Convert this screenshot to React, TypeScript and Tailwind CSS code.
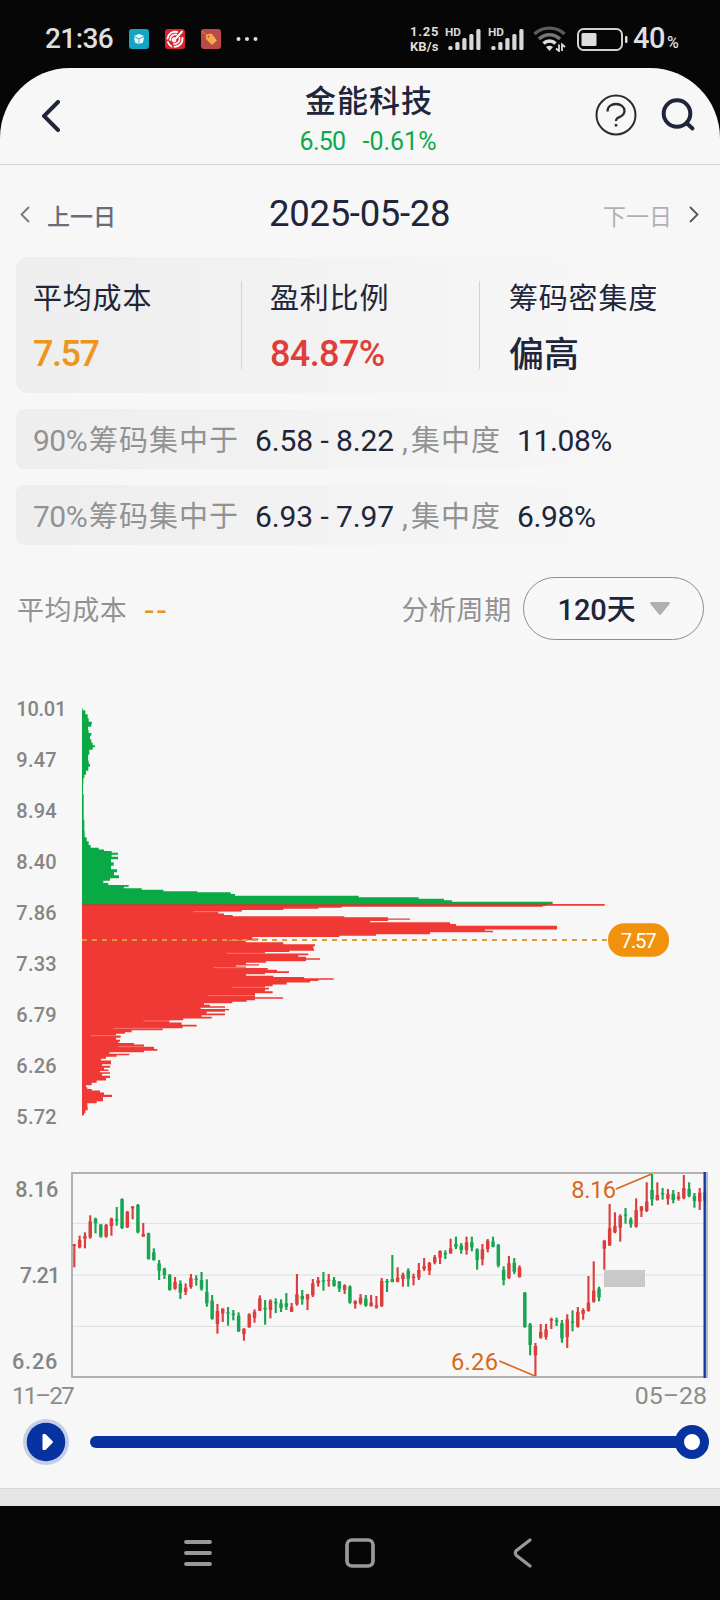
import React from 'react';

type Step = [number, number];
type Candle = [number, number, number, number, number];

// [right edge, y] of the chip distribution above the current price, in 1/3 px
const LOSS_STEPS: Step[] = [
  [248, 85], [256, 97], [263, 108], [266, 122], [276, 128], [274, 134], [264, 146], [266, 155], [274, 163],
  [270, 172], [274, 183], [278, 193], [285, 199], [278, 205], [268, 214], [264, 235], [266, 248], [270, 255],
  [265, 266], [258, 278], [253, 290], [250, 300], [249, 325], [251, 360], [251, 400], [253, 440], [254, 466],
  [260, 478], [266, 490], [272, 500], [296, 506], [312, 511], [335, 515], [354, 521], [335, 527], [354, 534],
  [333, 542], [341, 552], [333, 562], [351, 574], [342, 580], [357, 591], [330, 599], [310, 606], [325, 612],
  [386, 618], [372, 623], [425, 627], [490, 632], [592, 635], [692, 639], [705, 645], [1076, 650], [1256, 654],
  [1332, 659], [1356, 663], [1658, 668], [1658, 671],
];

// same, below the current price
const PROFIT_STEPS: Step[] = [
  [1814, 42], [1814, 46], [1628, 49], [1025, 52], [955, 54], [850, 58], [725, 62], [655, 68], [672, 73], [698, 77],
  [1033, 80], [1164, 84], [1230, 87], [1164, 91], [1110, 95], [1350, 99], [1368, 105], [1671, 109], [1671, 117],
  [1455, 120], [1479, 124], [1290, 130], [1128, 135], [1018, 139], [757, 143], [775, 148], [737, 154],
  [850, 160], [945, 165], [940, 172], [942, 180], [868, 184], [795, 188], [925, 193], [895, 198],
  [918, 203], [960, 207], [918, 212], [798, 216], [738, 221], [777, 225], [708, 228], [738, 231],
  [803, 237], [831, 241], [867, 247], [795, 251], [738, 255], [820, 259], [912, 263], [1001, 267], [955, 271],
  [930, 275], [860, 280], [818, 287], [795, 290], [807, 296], [795, 301], [818, 307], [765, 313],
  [765, 320], [849, 324], [765, 329], [740, 333], [697, 338], [612, 342], [630, 347], [675, 351],
  [602, 355], [687, 359], [675, 363], [620, 368], [675, 373], [605, 378], [635, 383], [550, 388],
  [508, 394], [545, 401], [590, 407], [548, 412], [488, 418], [395, 424], [375, 429], [348, 433],
  [362, 440], [348, 446], [360, 453], [355, 457], [402, 461], [432, 466], [462, 474],
  [472, 480], [432, 485], [328, 489], [388, 493], [350, 498], [318, 503], [303, 509], [333, 514], [333, 520],
  [306, 525], [330, 530], [312, 536], [325, 541], [300, 545], [330, 549], [306, 554], [330, 560], [318, 568],
  [290, 575], [275, 582], [258, 589], [262, 595], [275, 599], [300, 604], [312, 611], [336, 618], [309, 624],
  [309, 631], [290, 637], [262, 643], [263, 655], [256, 666], [252, 674], [247, 677],
];

// hairline gaps between neighbouring bars: [from, to, y]
const GAPS = [
  [580, 725, 65], [685, 745, 151], [680, 795, 190], [640, 738, 233], [697, 795, 292],
  [625, 765, 317], [430, 508, 393], [340, 488, 415], [272, 348, 437], [355, 432, 470],
];

// [rising, high, low, body top, body bottom]
const CANDLES: Candle[] = [
  [1, 252, 322, 253, 258], [1, 227, 265, 240, 262], [1, 217, 265, 228, 236], [1, 166, 236, 184, 232],
  [0, 173, 220, 176, 190], [0, 192, 233, 194, 230], [1, 192, 233, 195, 230], [1, 173, 227, 176, 198],
  [0, 141, 197, 178, 182], [0, 115, 207, 117, 204], [1, 153, 204, 155, 202], [1, 138, 178, 140, 145],
  [0, 132, 220, 135, 217], [1, 189, 230, 222, 230], [0, 218, 299, 220, 297], [0, 265, 302, 277, 300],
  [0, 300, 360, 310, 332], [0, 323, 357, 326, 345], [0, 342, 392, 345, 390], [1, 351, 389, 366, 386],
  [0, 361, 417, 371, 398], [1, 370, 405, 383, 395], [1, 342, 386, 354, 381], [0, 346, 377, 356, 360],
  [0, 336, 392, 360, 387], [0, 358, 440, 396, 430], [0, 405, 479, 422, 477], [1, 432, 521, 453, 492],
  [1, 445, 486, 446, 460], [0, 441, 497, 457, 461], [0, 450, 481, 461, 465], [0, 457, 516, 467, 514],
  [1, 505, 542, 506, 522], [1, 460, 503, 463, 502], [1, 448, 488, 455, 474], [1, 406, 453, 415, 452],
  [0, 420, 494, 444, 448], [1, 418, 475, 422, 450], [0, 415, 459, 426, 430], [0, 418, 456, 430, 444],
  [0, 399, 450, 430, 440], [1, 429, 456, 441, 455], [1, 342, 437, 403, 433], [0, 390, 434, 408, 418],
  [1, 402, 450, 403, 418], [1, 357, 411, 370, 406], [1, 351, 380, 361, 370], [0, 336, 392, 361, 365],
  [1, 342, 380, 359, 363], [0, 351, 380, 360, 378], [0, 363, 396, 365, 386], [1, 373, 402, 376, 390],
  [0, 376, 431, 380, 428], [1, 421, 446, 423, 432], [1, 402, 434, 413, 430], [0, 405, 440, 416, 437],
  [1, 405, 440, 428, 438], [1, 408, 446, 436, 442], [1, 354, 441, 363, 438], [0, 357, 396, 363, 368],
  [0, 285, 367, 357, 366], [1, 322, 367, 353, 365], [1, 338, 380, 344, 357], [0, 325, 380, 332, 356],
  [1, 341, 376, 350, 354], [1, 309, 360, 330, 353], [1, 294, 333, 318, 327], [1, 306, 345, 309, 332],
  [1, 285, 313, 291, 308], [1, 271, 312, 273, 293], [0, 271, 297, 279, 283], [1, 236, 281, 265, 280],
  [0, 230, 267, 252, 260], [0, 249, 281, 256, 270], [1, 230, 284, 247, 270], [0, 230, 274, 247, 262],
  [0, 265, 329, 268, 300], [1, 252, 316, 268, 298], [1, 237, 277, 242, 267], [0, 230, 262, 245, 260],
  [0, 252, 322, 255, 316], [0, 319, 376, 330, 360], [1, 288, 357, 310, 354], [0, 294, 342, 308, 335],
  [1, 316, 353, 322, 351], [0, 396, 503, 398, 501], [0, 489, 586, 493, 555], [1, 549, 648, 558, 586],
  [1, 492, 536, 516, 533], [1, 492, 539, 508, 531], [1, 473, 507, 477, 482], [0, 473, 498, 481, 485],
  [0, 480, 548, 490, 535], [1, 463, 564, 478, 531], [0, 451, 514, 484, 488], [1, 441, 503, 456, 500],
  [1, 445, 479, 450, 462], [1, 348, 455, 428, 453], [1, 304, 428, 392, 425], [0, 380, 424, 386, 412],
  [1, 240, 329, 242, 266], [1, 132, 258, 205, 256], [1, 157, 220, 198, 217], [1, 163, 245, 168, 203],
  [0, 144, 191, 163, 167], [0, 172, 203, 178, 193], [1, 115, 203, 150, 200], [1, 138, 171, 140, 153],
  [1, 67, 156, 125, 153], [0, 42, 137, 90, 118], [1, 67, 122, 105, 120], [0, 84, 119, 99, 103],
  [1, 87, 134, 102, 117], [0, 90, 130, 102, 120], [1, 96, 122, 109, 117], [1, 45, 118, 84, 114],
  [0, 67, 112, 87, 108], [0, 99, 143, 108, 123], [1, 84, 150, 98, 125], [0, 90, 128, 97, 122],
];

const PRICES = ['10.01', '9.47', '8.94', '8.40', '7.86', '7.33', '6.79', '6.26', '5.72'];

const stepPath = (steps: Step[], base: number) => {
  let d = `M${base} ${steps[0][1]}`;
  steps.forEach(([x, y], i) => {
    const next = steps[i + 1];
    d += `H${x}V${next ? (y + next[1]) / 2 : y + 2}`;
  });
  return `${d}H${base}Z`;
};

const Signal = () => (
  <svg width="36" height="26" viewBox="0 0 36 26" className="shrink-0">
    <text x="0" y="9.500" fontSize="11" fontWeight="700" textLength="16" lengthAdjust="spacingAndGlyphs" fill="#d8d8d8">HD</text>
    {[4, 8, 12, 16, 21].map((h, i) => (
      <rect key={h} x={3.3 + i * 7} y={24 - h} width="4.200" height={h} rx="1.500" fill="#d8d8d8" />
    ))}
  </svg>
);

const StatusBar = () => (
  <div className="flex h-[68px] items-center pt-[10px] pl-[45px] text-[#dedede]">
    <span className="w-[84px] text-[28px] font-medium tracking-[-0.6px]">21:36</span>
    <svg width="20" height="20" viewBox="0 0 20 20">
      <rect width="20" height="20" rx="3" fill="#12a5c4" />
      <path d="M10 5l5 2-5 2.200L5 7z" fill="#fff" />
      <path d="M5 8l4.600 2v5L6 13.500zM15 8l-4.600 2v5l3.600-1.500z" fill="#e8f8fb" />
    </svg>
    <svg width="20" height="20" viewBox="0 0 20 20" className="ml-4">
      <rect width="20" height="20" rx="3" fill="#d9232f" />
      <g fill="none" stroke="#fff" strokeLinecap="round">
        <path d="M17 2.500L9 11.500M2.500 9.500C3 5 7 2 12 3M17.500 9c.5 4.500-3 9-8 8.800" strokeWidth="1.900" />
        <path d="M5 11c0-3.500 3-6 6.500-5.500M14.500 8.500c1 3.500-2 6.500-5.500 6.500M2.800 13c.7 2 1.700 3.500 3.700 4.500M9 9c-3 2-1 4.500 1.500 3" strokeWidth="1.700" />
      </g>
    </svg>
    <svg width="20" height="20" viewBox="0 0 20 20" className="ml-4">
      <rect width="20" height="20" rx="3" fill="#bd4a4b" />
      <path d="M5.500 6l5-1 5 6.500-4.500 4L5.500 10z" fill="#f3ad45" stroke="#f3ad45" strokeLinejoin="round" />
      <path d="M1 2.500l5 4" stroke="#f0c070" strokeWidth=".8" strokeDasharray="1.500 1" />
      <circle cx="7.500" cy="7.500" r="1" fill="#bd4a4b" />
    </svg>
    <svg width="22" height="6" viewBox="0 0 22 6" className="ml-[15px]">
      <circle cx="2.500" cy="3" r="2" fill="#dedede" />
      <circle cx="11" cy="3" r="2" fill="#dedede" />
      <circle cx="19.500" cy="3" r="2" fill="#dedede" />
    </svg>
    <div className="ml-[152px] w-[35px] text-[13px] leading-[15px] font-bold whitespace-nowrap">
      <div className="tracking-[0.8px]">1.25</div>
      <div className="tracking-[0.1px]">KB/s</div>
    </div>
    <Signal />
    <div className="w-[7px]" />
    <Signal />
    <svg width="34" height="26" viewBox="0 0 34 26" className="ml-[9px]">
      <g fill="none" strokeWidth="3.400">
        <path d="M1.500 8a22 22 0 0 1 30 0" stroke="#5c5c5c" />
        <path d="M6 13a15 15 0 0 1 21 0" stroke="#777" />
        <path d="M10.500 17.500a8.500 8.500 0 0 1 12 0" stroke="#dedede" />
      </g>
      <path d="M16.500 25l-3.500-4a6 6 0 0 1 7 0z" fill="#dedede" />
      <path d="M26 18.500v6.500l-3-2.500M29 25v-6.500l3 2.500" stroke="#dedede" strokeWidth="1.800" fill="none" />
    </svg>
    <svg width="52" height="24" viewBox="0 0 52 24" className="ml-[10px]">
      <rect x="1" y="2" width="44" height="21" rx="5.500" fill="none" stroke="#d0d0d0" strokeWidth="2" />
      <rect x="4.500" y="6" width="15" height="13" rx="1.500" fill="#dedede" />
      <rect x="48" y="9" width="2.500" height="7" rx="1" fill="#dedede" />
    </svg>
    <div className="ml-[4px] flex items-baseline font-medium">
      <span className="text-[29px] tracking-[-0.5px]">40</span>
      <span className="ml-[2px] text-[16px]">%</span>
    </div>
  </div>
);

const Header = () => (
  <header className="flex h-[97px] items-start border-b border-[#d2d2d2]">
    <svg width="18" height="32" viewBox="0 0 18 32" className="mt-8 ml-[42px] shrink-0">
      <path d="M16 2L2 16l14 14" fill="none" stroke="#20253a" strokeWidth="4" strokeLinecap="round" />
    </svg>
    <div className="ml-[228px] flex w-[160px] flex-col items-center">
      <h1 className="mt-[16px] pl-[2px] text-[31px] leading-[36px] font-medium tracking-[1px] whitespace-nowrap">金能科技</h1>
      <div className="mt-[6px] flex gap-[17px] text-[25px] leading-[32px] text-[#0da84a]">
        <span className="tracking-[-0.7px]">6.50</span>
        <span>-0.61%</span>
      </div>
    </div>
    <svg width="42" height="42" viewBox="0 0 42 42" className="mt-[26px] ml-[147px]" fill="none" stroke="#2b2c31">
      <circle cx="21" cy="21" r="19.500" strokeWidth="2" />
      <path d="M12.500 17.500c0-5 4-7.500 8.500-7.500s8.500 2.700 8.500 7-3.500 5.500-6 6.500c-2 1-2.500 1.700-2.500 3.500" strokeWidth="2.300" />
      <path d="M21 30v2.500" strokeWidth="2.500" />
    </svg>
    <svg width="36" height="36" viewBox="0 0 36 36" className="mt-[29px] ml-[23px]" fill="none" stroke="#20253a" strokeWidth="4">
      <circle cx="17" cy="16.500" r="13.300" />
      <path d="M26.500 26l6 5.500" strokeLinecap="round" />
    </svg>
  </header>
);

const DayNav = () => (
  <div className="flex h-[92px] items-center pt-[6px]">
    <svg width="10" height="17" viewBox="0 0 10 17" className="ml-[20px]">
      <path d="M9 1L1.500 8.500 9 16" fill="none" stroke="#777" strokeWidth="1.800" />
    </svg>
    <span className="mt-[9px] ml-[17px] w-[222px] text-[23px] font-medium text-[#696d79]">上一日</span>
    <span className="w-[202px] text-[36.500px] leading-[40px] tracking-[-0.300px] whitespace-nowrap">2025-05-28</span>
    <span className="mt-[9px] ml-[132px] text-[23px] text-[#b0b1b6]">下一日</span>
    <svg width="10" height="17" viewBox="0 0 10 17" className="ml-[17px]">
      <path d="M1 1l7.500 7.500L1 16" fill="none" stroke="#555" strokeWidth="1.800" />
    </svg>
  </div>
);

const Stat: React.FC<{ label: string; value: string; className: string }> = ({ label, value, className }) => (
  <div>
    <div className="pt-px text-[29px] leading-[34px] tracking-[0.800px] whitespace-nowrap">{label}</div>
    <div className={`leading-[50px] font-medium whitespace-nowrap ${className}`}>{value}</div>
  </div>
);

const Concentration: React.FC<{ pct: string; range: string; value: string }> = ({ pct, range, value }) => (
  <div className="mt-4 flex h-[60px] items-baseline rounded-lg bg-linear-to-r from-[#eeeeee] to-[#f7f7f7] to-90% pt-[2px] pl-[17px] text-[30px] leading-[60px] whitespace-nowrap">
    <span className="w-[56px] tracking-[-0.500px] text-[#929292]">{pct}</span>
    <span className="w-[166px] text-[29px] tracking-[1px] text-[#929292]">筹码集中于</span>
    <span className="w-[147px] tracking-[-0.100px]">{range}</span>
    <span className="w-[9px] text-[#929292]">,</span>
    <span className="w-[106px] text-[29px] tracking-[1px] text-[#929292]">集中度</span>
    <span className="tracking-[-0.400px]">{value}</span>
  </div>
);

const DistributionChart = () => (
  <svg width="720" height="492" viewBox="0 0 2160 1476" className="block">
    <g fontSize="60" fontWeight="500" fill="#858585">
      {PRICES.map((p, i) => (
        <text key={p} x="49" y={108 + i * 153} textLength={p.length > 4 ? 150 : 121}>{p}</text>
      ))}
    </g>
    <path d={stepPath(LOSS_STEPS, 246)} fill="#09aa45" />
    <g transform="translate(0 630)">
      <path d={stepPath(PROFIT_STEPS, 246)} fill="#f03834" />
      {GAPS.map(([from, to, y]) => (
        <path key={y} d={`M${from} ${y}H${to}`} stroke="#f79a96" strokeWidth="2" />
      ))}
    </g>
    <path d="M246 675H1640" stroke="#8a5a33" strokeWidth="4" />
    <path d="M246 780H1820" stroke="#dd9c38" strokeWidth="6" strokeDasharray="15 15" />
    <rect x="1824" y="730" width="183" height="100" rx="48" fill="#f1920f" />
    <text x="1862" y="803" fontSize="61" textLength="108" fill="#fff">7.57</text>
  </svg>
);

const CandleChart = () => (
  <svg width="720" height="252" viewBox="0 0 2160 756" className="block">
    <g stroke="#dedede" strokeWidth="3">
      <path d="M218 190H2120M218 345H2120M218 499H2120" />
    </g>
    <rect x="216" y="39" width="1903" height="612" fill="none" stroke="#b2b2b2" strokeWidth="6" />
    <rect x="1812" y="330" width="123" height="51" fill="#c9c9c9" />
    {CANDLES.map(([up, high, low, top, bottom], i) => {
      const x = 223 + i * 15.9;
      return (
        <g key={i} fill={up ? '#dc3f3b' : '#18a451'}>
          <rect x={x - 3.2} y={high} width="6.400" height={low - high} />
          <rect x={x - 5.2} y={top} width="10.400" height={bottom - top} />
        </g>
      );
    })}
    <path d="M2121 36V654" stroke="#b0b6c6" strokeWidth="6" />
    <path d="M2114 36V654" stroke="#1238a0" strokeWidth="7" />
    <path d="M1848 87L1955 42M1498 603l107 45" stroke="#d66a1c" strokeWidth="5" fill="none" />
    <g fontSize="71" fill="#d66a1c">
      <text x="1714" y="113" textLength="134">8.16</text>
      <text x="1353" y="629" textLength="141">6.26</text>
    </g>
    <g fontSize="65" fontWeight="500" fill="#858585">
      <text x="46" y="110" textLength="129">8.16</text>
      <text x="59" y="368" textLength="122">7.21</text>
      <text x="36" y="626" textLength="136">6.26</text>
    </g>
    <g fontSize="73" fill="#8c8c8c">
      <text x="36" y="731" textLength="188">11–27</text>
      <text x="1904" y="731" textLength="217" lengthAdjust="spacingAndGlyphs">05–28</text>
    </g>
  </svg>
);

const Player = () => (
  <div className="flex h-[76px] items-center pb-[16px] pl-[23px]">
    <svg width="46" height="46" viewBox="0 0 46 46" className="shrink-0">
      <circle cx="23" cy="23" r="23" fill="#c6cee7" />
      <circle cx="23" cy="23" r="19.300" fill="#0733a1" />
      <path d="M20.500 16v14h1.500l7-7-7-7z" fill="#fff" stroke="#fff" strokeWidth="2" strokeLinejoin="round" />
    </svg>
    <div className="ml-[21px] h-[12px] w-[594px] rounded-l-full bg-[#0733a1]" />
    <div className="-ml-[9px] h-[34px] w-[34px] rounded-full border-[9px] border-[#0733a1] bg-white" />
  </div>
);

const NavBar = () => (
  <div className="flex h-[94px] items-center text-[#999]">
    <svg width="28" height="28" viewBox="0 0 28 28" className="ml-[184px]">
      <path d="M2 3h24M2 14h24M2 25h24" stroke="currentColor" strokeWidth="3.800" strokeLinecap="round" />
    </svg>
    <svg width="30" height="30" viewBox="0 0 30 30" className="ml-[133px]">
      <rect x="2" y="2" width="26" height="26" rx="5" fill="none" stroke="currentColor" strokeWidth="3.700" />
    </svg>
    <svg width="20" height="30" viewBox="0 0 20 30" className="ml-[138px]">
      <path d="M17 2L3.500 12.500q-2.500 2.500 0 5L17 28" fill="none" stroke="currentColor" strokeWidth="3.200" strokeLinecap="round" />
    </svg>
  </div>
);

const App = () => (
  <div className="h-[1600px] w-[720px] overflow-hidden bg-[#060606] font-[Roboto,'Noto_Sans_CJK_SC',sans-serif] text-[#20253a]">
    <StatusBar />
    <main className="h-[1438px] overflow-hidden rounded-t-[70px] bg-[#f7f7f7]">
      <Header />
      <DayNav />
      <section className="px-4">
        <div className="flex h-[136px] rounded-xl bg-linear-to-r from-[#eeeeee] to-[#f7f7f7] to-90% pt-[24px] pl-[17px]">
          <div className="h-[88px] w-[209px] border-r border-[#d2d2d2]">
            <Stat label="平均成本" value="7.57" className="pt-[13px] text-[36px] tracking-[-1.5px] text-[#ee951b]" />
          </div>
          <div className="h-[88px] w-[238px] border-r border-[#d2d2d2] pl-[28px]">
            <Stat label="盈利比例" value="84.87%" className="pt-[13px] text-[36px] tracking-[-0.6px] text-[#e03e3a]" />
          </div>
          <div className="pl-[29px]">
            <Stat label="筹码密集度" value="偏高" className="pt-[15px] text-[35px]" />
          </div>
        </div>
        <Concentration pct="90%" range="6.58 - 8.22" value="11.08%" />
        <Concentration pct="70%" range="6.93 - 7.97" value="6.98%" />
      </section>
      <div className="mt-8 flex h-[63px] items-center pl-[17px] text-[27px] text-[#929292]">
        <span className="pt-[6px] tracking-[0.6px]">平均成本</span>
        <span className="ml-[17px] w-[257px] pt-[4px] text-[34px] tracking-[3px] text-[#e8951f]">--</span>
        <span className="w-[122px] pt-[6px] tracking-[0.6px]">分析周期</span>
        <button className="flex h-[63px] w-[181px] items-center rounded-full border border-[#8d8d8d] pl-[33px] text-[29px] font-medium text-[#20253a]">
          <span className="pt-[5px]">120天</span>
          <svg width="22" height="14" viewBox="0 0 22 14" className="ml-[13px]">
            <path d="M2 1h18l-9 11z" fill="#b0b0b0" stroke="#b0b0b0" strokeWidth="2" strokeLinejoin="round" />
          </svg>
        </button>
      </div>
      <div className="pt-[40px]">
        <DistributionChart />
      </div>
      <div className="-mt-[12px]">
        <CandleChart />
      </div>
      <Player />
      <div className="h-[18px] border-t border-[#d8d8d8] bg-[#e6e6e6]" />
    </main>
    <NavBar />
  </div>
);

export default App;
